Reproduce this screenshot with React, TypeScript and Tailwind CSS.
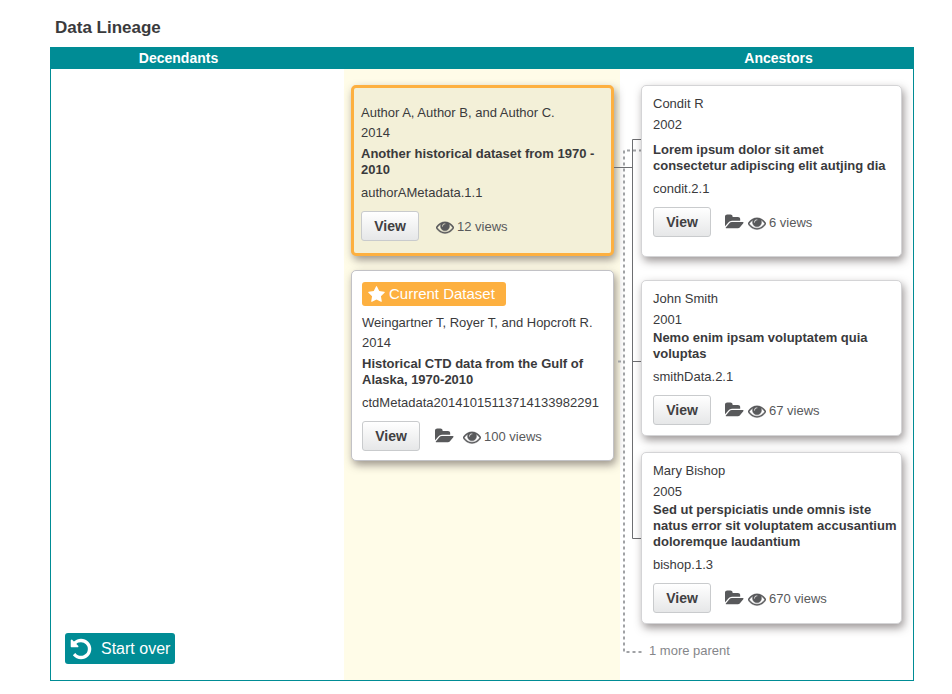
type Dataset = {
  authors: string;
  year: string;
  title: string;
  id: string;
  views: number;
  hasPackage: boolean;
};

const descendantSource: Dataset = {
  authors: 'Author A, Author B, and Author C.',
  year: '2014',
  title: 'Another historical dataset from 1970 - 2010',
  id: 'authorAMetadata.1.1',
  views: 12,
  hasPackage: false,
};

const current: Dataset = {
  authors: 'Weingartner T, Royer T, and Hopcroft R.',
  year: '2014',
  title: 'Historical CTD data from the Gulf of Alaska, 1970-2010',
  id: 'ctdMetadata20141015113714133982291',
  views: 100,
  hasPackage: true,
};

const condit: Dataset = {
  authors: 'Condit R',
  year: '2002',
  title: 'Lorem ipsum dolor sit amet consectetur adipiscing elit autjing dia',
  id: 'condit.2.1',
  views: 6,
  hasPackage: true,
};

const smith: Dataset = {
  authors: 'John Smith',
  year: '2001',
  title: 'Nemo enim ipsam voluptatem quia voluptas',
  id: 'smithData.2.1',
  views: 67,
  hasPackage: true,
};

const bishop: Dataset = {
  authors: 'Mary Bishop',
  year: '2005',
  title: 'Sed ut perspiciatis unde omnis iste natus error sit voluptatem accusantium doloremque laudantium',
  id: 'bishop.1.3',
  views: 670,
  hasPackage: true,
};

function EyeIcon() {
  return (
    <svg
      viewBox="0 0 1792 1792"
      className="h-[18px] w-[18px] shrink-0"
      fill="currentColor"
      stroke="currentColor"
      strokeWidth="40"
      aria-hidden="true"
    >
      <path d="M1664 960q-152-236-381-353 61 104 61 225 0 185-131.5 316.5t-316.5 131.5-316.5-131.5-131.5-316.5q0-121 61-225-229 117-381 353 133 205 333.5 326.5t434.5 121.5 434.5-121.5 333.5-326.5zm-720-384q0-20-14-34t-34-14q-125 0-214.5 89.5t-89.5 214.5q0 20 14 34t34 14 34-14 14-34q0-86 61-147t147-61q20 0 34-14t14-34zm848 384q0 34-20 69-140 230-376.5 368.5t-499.5 138.5-499.5-139-376.5-368q-20-35-20-69t20-69q140-229 376.5-368t499.5-139 499.5 139 376.5 368q20 35 20 69z" />
    </svg>
  );
}

function FolderIcon() {
  return (
    <svg viewBox="0 0 1920 1792" className="h-[18px] w-[19px] shrink-0" fill="currentColor" aria-hidden="true">
      <path d="M1879 952q0 31-31 66l-336 396q-43 51-120.5 86.5t-143.5 35.5h-1088q-34 0-60.5-13t-26.5-43q0-31 31-66l336-396q43-51 120.5-86.5t143.5-35.5h1088q34 0 60.5 13t26.5 43zm-343-344v160h-832q-94 0-197 47.5t-164 119.5l-337 396-5 6q0-4-.5-12.5t-.5-12.5v-960q0-92 66-158t158-66h320q92 0 158 66t66 158v32h544q92 0 158 66t66 158z" />
    </svg>
  );
}

function StarIcon() {
  return (
    <svg viewBox="0 0 1664 1600" className="h-4 w-[17px] shrink-0" fill="currentColor" aria-hidden="true">
      <path d="M1664 615q0 22-26 48l-363 354 86 500q1 7 1 20 0 21-10.500 35.500t-30.500 14.500q-19 0-40-12l-449-236-449 236q-22 12-40 12-21 0-31.500-14.500t-10.500-35.500q0-6 2-20l86-500-364-354q-25-27-25-48 0-37 56-46l502-73 225-455q19-41 49-41t49 41l225 455 502 73q56 9 56 46z" />
    </svg>
  );
}

function UndoIcon() {
  return (
    <svg viewBox="0 0 1792 1792" className="h-6 w-6 shrink-0" fill="currentColor" aria-hidden="true">
      <path d="M1664 896q0 156-61 298t-164 245-245 164-298 61q-172 0-327-72.500t-264-204.500q-7-10-6.500-22.500t8.500-20.500l137-138q10-9 25-9 16 2 23 12 73 95 179 147t225 52q104 0 198.500-40.500t163.500-109.500 109.500-163.500 40.500-198.500-40.500-198.500-109.500-163.500-163.500-109.500-198.500-40.500q-98 0-188 35.500t-160 101.500l137 138q31 30 14 69-17 40-59 40h-448q-26 0-45-19t-19-45v-448q0-42 40-59 39-17 69 14l130 129q107-101 244.500-156.500t284.500-55.500q156 0 298 61t245 164 164 245 61 298z" />
    </svg>
  );
}

function DatasetCard({
  data,
  frame,
  yearGap = '',
  titleGap = '',
  actions,
  isCurrent = false,
}: {
  data: Dataset;
  frame: string;
  yearGap?: string;
  titleGap?: string;
  actions: string;
  isCurrent?: boolean;
}) {
  return (
    <article className={`relative rounded-[5px] text-[13px] leading-5 shadow-[2px_4px_9px_rgba(60,50,50,0.5)] ${frame}`}>
      {isCurrent && (
        <p className="mb-[7px] flex h-6 w-36 items-center gap-1 rounded-[3px] bg-[#fdb040] pl-1.5 text-[15px] text-white">
          <StarIcon />
          Current Dataset
        </p>
      )}
      <p>{data.authors}</p>
      <p className={yearGap}>{data.year}</p>
      <h3 className={`leading-4 font-bold ${titleGap}`}>{data.title}</h3>
      <p className="mt-[5px]">{data.id}</p>
      <div className={`mt-2 flex items-center text-[#58595b] ${actions}`}>
        <button
          type="button"
          className="h-[30px] w-[58px] rounded-[3px] border border-[#c9cbcd] bg-linear-to-b from-white to-[#e6e7e8] text-[14px] font-bold text-[#414042]"
        >
          View
        </button>
        {data.hasPackage && <FolderIcon />}
        <span className="flex items-center gap-[3px] pt-0.5">
          <EyeIcon />
          {data.views} views
        </span>
      </div>
    </article>
  );
}

function Connectors() {
  return (
    <svg className="pointer-events-none absolute top-0 -left-1.5 h-[590px] w-8" viewBox="0 0 32 590" fill="none" aria-hidden="true">
      <path d="M0 98.500H19M28 70.500H18.500V469.500H28M18.500 292.500H28" stroke="#6d6e71" />
      <path d="M28 81.500H10V583H30M4 292.500H10" stroke="#a0a2a5" strokeWidth="2" strokeDasharray="3 3" />
    </svg>
  );
}

export default function App() {
  return (
    <main className="bg-white pt-[18px] pr-[38px] pb-[13px] pl-[50px] font-['Liberation_Sans',Arial,sans-serif] text-[#3a3a3c]">
      <h1 className="pl-[5px] text-[17px] leading-5 font-bold">Data Lineage</h1>

      <section className="mt-[9px] border border-[#008c95]">
        <div className="grid h-[21px] grid-cols-[1fr_276px_1fr] bg-[#008c95] text-center text-sm leading-5 font-bold text-white">
          <h2 className="pr-[38px]">Decendants</h2>
          <h2 className="col-start-3 pl-6">Ancestors</h2>
        </div>

        <div className="grid grid-cols-[1fr_276px_1fr]">
          <div className="flex flex-col items-start justify-end pb-4 pl-3.5">
            <button
              type="button"
              className="flex h-[31px] w-[110px] items-center gap-2 rounded-[3px] bg-[#008c95] pl-1 text-base text-white"
            >
              <UndoIcon />
              Start over
            </button>
          </div>

          <div className="flex flex-col gap-3.5 bg-[#fffce8] pt-4 pr-1.5 pl-[7px]">
            <DatasetCard
              data={descendantSource}
              frame="border-[3px] border-[#fdb040] bg-[#f3f0d8] pt-[15px] pr-2 pb-3 pl-[7px]"
              titleGap="mt-[3px]"
              actions="gap-[17px]"
            />
            <DatasetCard
              data={current}
              frame="border border-[#c2c2c6] bg-white pt-[11px] pr-2 pb-[9px] pl-2.5"
              titleGap="mt-[3px]"
              actions="gap-x-[9px] [&>button]:mr-1.5"
              isCurrent
            />
          </div>

          <div className="relative pt-4 pr-[11px] pb-[19px] pl-[21px]">
            <Connectors />
            <DatasetCard
              data={condit}
              frame="mb-[23px] border border-[#d4d4d6] bg-white pt-2 pr-1 pb-[19px] pl-[11px]"
              yearGap="mt-px"
              titleGap="mt-[7px]"
              actions="gap-x-1 [&>button]:mr-2.5"
            />
            <DatasetCard
              data={smith}
              frame="mb-4 border border-[#d4d4d6] bg-white pt-2 pr-1 pb-2.5 pl-[11px]"
              yearGap="mt-px"
              actions="gap-x-1 [&>button]:mr-2.5"
            />
            <DatasetCard
              data={bishop}
              frame="border border-[#d4d4d6] bg-white pt-2 pr-1 pb-2.5 pl-[11px]"
              yearGap="mt-px"
              actions="gap-x-1 [&>button]:mr-2.5"
            />
            <p className="mt-[17px] pl-2 text-[13px] leading-5 text-[#85868a]">1 more parent</p>
          </div>
        </div>
      </section>
    </main>
  );
}
